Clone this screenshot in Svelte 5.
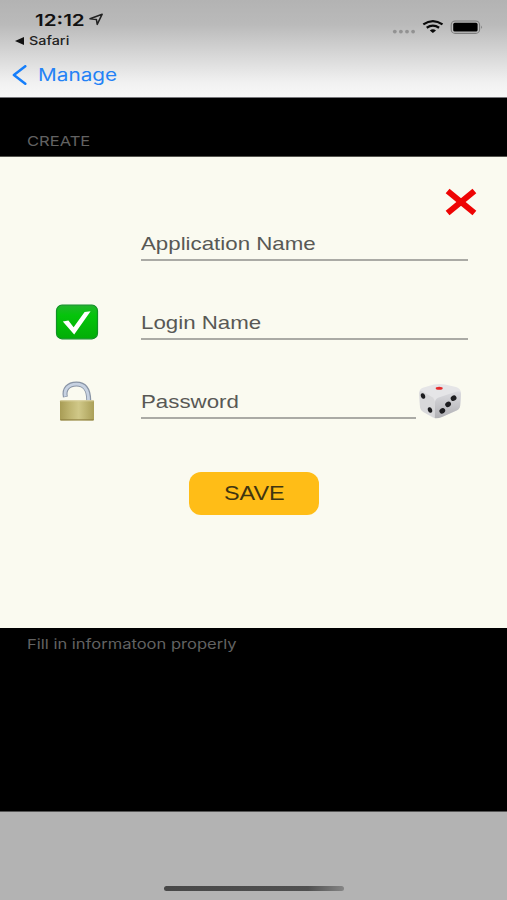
<script>
  let fields = [
    { label: 'Application Name', icon: '', random: false },
    { label: 'Login Name', icon: 'check', random: false },
    { label: 'Password', icon: 'lock', random: true }
  ];
</script>

<div class="screen">
  <header>
    <div class="status">
      <div class="clock">
        <span class="wide time">12:12</span>
        <svg class="location" width="15" height="13" viewBox="0 0 15 13">
          <path d="M1 5.8 L13.2 1.2 L8.2 11.4 L7.4 6.4 Z" fill="none" stroke="#222" stroke-width="1.5" stroke-linejoin="round" />
        </svg>
      </div>
      <svg class="signals" width="92" height="18" viewBox="0 0 92 18">
        <g fill="#929292">
          <circle cx="3.8" cy="12.6" r="1.9" />
          <circle cx="9.9" cy="12.6" r="1.9" />
          <circle cx="16" cy="12.6" r="1.9" />
          <circle cx="22.1" cy="12.6" r="1.9" />
        </g>
        <g fill="none" stroke="#0a0a0a" stroke-width="2.3">
          <path d="M32.3 5.4 Q41.9 -1.2 51.5 5.4" />
          <path d="M35.7 8.8 Q41.9 4.6 48.1 8.8" />
        </g>
        <path d="M38.8 11.4 Q41.9 9.2 45 11.4 L41.9 14 Z" fill="#0a0a0a" />
        <rect x="60.2" y="2" width="28.4" height="12.4" rx="4" fill="none" stroke="#7d7d7d" stroke-width="1.1" />
        <rect x="62.2" y="3.8" width="24.4" height="8.8" rx="1.6" fill="#000" />
        <path d="M90.3 6.4 Q92 8.2 90.3 10 Z" fill="#6d6d6d" />
      </svg>
    </div>
    <div class="back-app">
      <svg width="9" height="8" viewBox="0 0 9 8"><path d="M0 4 L9 0 V8 Z" fill="#111" /></svg>
      <span class="wide safari">Safari</span>
    </div>
    <div class="nav">
      <svg width="15" height="20" viewBox="0 0 15 20">
        <path d="M13.3 1.2 L1.9 10 L13.3 18.8" fill="none" stroke="#157efb" stroke-width="2.5" stroke-linecap="round" stroke-linejoin="round" />
      </svg>
      <span class="wide manage">Manage</span>
    </div>
  </header>

  <div class="section-title"><span class="wide create">CREATE</span></div>

  <main>
    <div class="close">
      <svg width="34" height="28" viewBox="0 0 34 28">
        <path d="M3.6 3 L30.4 25 M30.4 3 L3.6 25" stroke="#ee0404" stroke-width="6" />
      </svg>
    </div>

    {#each fields as field}
      <div class="row">
        <div class="icon">
          {#if field.icon === 'check'}
            <svg width="44" height="36" viewBox="0 0 44 36">
              <defs>
                <linearGradient id="green" x1="0" y1="0" x2="0" y2="1">
                  <stop offset="0" stop-color="#22b52c" />
                  <stop offset="0.3" stop-color="#05c40b" />
                  <stop offset="1" stop-color="#02ad07" />
                </linearGradient>
              </defs>
              <rect x="1.5" y="1.2" width="41" height="33.6" rx="5.5" fill="url(#green)" stroke="#119225" stroke-width="1.2" />
              <path d="M7.8 17.4 L13.4 16.4 L18.6 23.2 L29.6 8 L35.6 7.2 L19.2 30.4 Z" fill="#fff" />
            </svg>
          {:else if field.icon === 'lock'}
            <svg width="44" height="42" viewBox="0 0 44 42">
              <defs>
                <linearGradient id="brass" x1="0" y1="0" x2="1" y2="0">
                  <stop offset="0" stop-color="#a89c55" />
                  <stop offset="0.3" stop-color="#c0b672" />
                  <stop offset="0.55" stop-color="#d0c888" />
                  <stop offset="1" stop-color="#aa9f58" />
                </linearGradient>
              </defs>
              <path d="M10.4 17 C8.6 9 13.4 4 21.4 4 C29.6 4 33.8 9 33.8 21" fill="none" stroke="#8994a5" stroke-width="5" />
              <path d="M10.4 16.4 C8.8 9 13.6 4.1 21.4 4.1 C29.4 4.1 33.6 9 33.6 21" fill="none" stroke="#c7d2e2" stroke-width="2.8" />
              <rect x="5" y="20.2" width="34" height="20.2" rx="1.2" fill="url(#brass)" />
              <path d="M5.4 20.8 H38.6" stroke="#ddd4a4" />
              <path d="M5.4 39.9 H38.6" stroke="#8b7c3e" />
            </svg>
          {/if}
        </div>
        <div class="field">
          <span class="wide label">{field.label}</span>
        </div>
        {#if field.random}
          <svg class="dice" width="44" height="38" viewBox="0 0 44 38">
            <defs>
              <linearGradient id="side" x1="0" y1="0" x2="0" y2="1">
                <stop offset="0" stop-color="#dcdce0" />
                <stop offset="1" stop-color="#b0b0b4" />
              </linearGradient>
            </defs>
            <path d="M1.2 11 Q1.2 6.6 5.6 5.4 L15 2.8 Q21 1.4 27 2.6 L38 5 Q43.2 6.6 43 11.6 L42.2 23.4 Q41.8 27 38.6 28.6 L24 35 Q18.4 37 14.5 35.4 L5.4 30 Q2.4 28.2 2 25 Z" fill="#e5e5e7" />
            <path d="M17 20 Q17.4 16.8 20.6 15.6 L38.6 9.4 Q43 8.6 43 12 L42.2 23.4 Q41.8 27 38.6 28.6 L24 35 Q19.4 36.8 16.4 36 Q15.8 27 17 20 Z" fill="url(#side)" />
            <path d="M1.2 11 Q1.6 8.4 4.4 9.4 L14.4 15.2 Q17 17 17 20 L16.8 36 L5.4 30 Q2.4 28.2 2 25 Z" fill="#d8d8da" />
            <ellipse cx="21.2" cy="6.2" rx="3.5" ry="1.5" fill="#e62b2b" />
            <g fill="#1d1d20">
              <ellipse cx="5" cy="14" rx="2.1" ry="2.9" transform="rotate(-20 5 14)" />
              <ellipse cx="12" cy="28" rx="2.1" ry="2.9" transform="rotate(-20 12 28)" />
              <ellipse cx="35.6" cy="16.2" rx="3" ry="2.6" transform="rotate(-35 35.6 16.2)" />
              <ellipse cx="30.1" cy="22.3" rx="3" ry="2.6" transform="rotate(-35 30.1 22.3)" />
              <ellipse cx="24.3" cy="28.8" rx="3" ry="2.6" transform="rotate(-35 24.3 28.8)" />
            </g>
          </svg>
        {/if}
      </div>
    {/each}

    <button class="save"><span class="wide save-text">SAVE</span></button>
  </main>

  <div class="hint"><span class="wide fill">Fill in informatoon properly</span></div>

  <footer><div class="home-bar"></div></footer>
</div>

<style>
  :global(body) {
    background: #000;
  }

  .screen {
    width: 507px;
    height: 900px;
    display: flex;
    flex-direction: column;
    overflow: hidden;
    background: #000;
    font-family: Inter, sans-serif;
  }

  /* text is drawn wider than the font's natural width */
  .wide {
    display: inline-block;
    white-space: nowrap;
    transform: scaleX(1.2);
    transform-origin: left center;
  }

  header {
    box-sizing: border-box;
    height: 98px;
    flex: none;
    background: linear-gradient(#b3b3b3, #bababa 25%, #dadada 60%, #f1f1f1 85%, #f8f8f8);
    border-bottom: 1px solid #77777b;
  }

  .status {
    height: 32px;
    display: flex;
    justify-content: space-between;
    padding: 0 24px 0 35px;
  }

  .clock {
    display: flex;
    padding-top: 10px;
  }

  .time {
    width: 54px;
    font-size: 16.5px;
    line-height: 20px;
    font-weight: 600;
    color: #111;
    transform: scaleX(1.25);
  }

  .location {
    margin-top: 3px;
  }

  .signals {
    margin-top: 19px;
  }

  .back-app {
    height: 17px;
    display: flex;
    align-items: center;
    gap: 5px;
    padding-left: 15px;
  }

  .safari {
    font-size: 12px;
    line-height: 17px;
    font-weight: 500;
    color: #222;
  }

  .nav {
    height: 51px;
    display: flex;
    align-items: center;
    gap: 11px;
    padding-left: 12px;
  }

  .manage {
    font-size: 17.3px;
    color: #2482f6;
  }

  .section-title {
    box-sizing: border-box;
    height: 59px;
    flex: none;
    padding: 32px 0 0 27px;
    border-bottom: 1px solid #55554f;
  }

  .create,
  .fill {
    font-size: 13.7px;
    line-height: 20px;
    color: #626262;
    transform: scaleX(1.208);
  }

  main {
    box-sizing: border-box;
    height: 471px;
    flex: none;
    background: #fafaf0;
    padding-top: 31px;
    font-family: "Liberation Sans", Arial, sans-serif;
  }

  .close {
    height: 28px;
    display: flex;
    justify-content: flex-end;
    padding-right: 29px;
  }

  .row {
    height: 46px;
    margin-bottom: 33px;
    display: flex;
    align-items: flex-end;
  }

  .icon {
    box-sizing: border-box;
    width: 141px;
    height: 44px;
    padding: 5px 0 0 55px;
    display: flex;
    align-items: center;
  }

  .field {
    box-sizing: border-box;
    width: 327px;
    height: 29px;
    margin-bottom: 1px;
    padding-top: 1px;
    border-bottom: 2px solid #aaaaa5;
  }

  .row:has(.dice) .field {
    width: 275px;
  }

  .label {
    font-size: 17.7px;
    line-height: 22px;
    color: #585855;
    transform: scaleX(1.26);
  }

  .dice {
    margin-left: 2px;
  }

  .save {
    display: block;
    width: 130px;
    height: 43px;
    margin: 52px 0 0 189px;
    padding: 0 0 0 35px;
    border: none;
    border-radius: 12px;
    background: #ffbd17;
    text-align: left;
    font-family: inherit;
  }

  .save-text {
    font-size: 19.5px;
    color: #3f3510;
  }

  .hint {
    height: 184px;
    flex: none;
    padding: 5px 0 0 27px;
    box-sizing: border-box;
    border-bottom: 1px solid #555;
  }

  footer {
    flex: 1;
    background: #b3b3b3;
    display: flex;
    align-items: flex-end;
    padding: 0 0 9px 164px;
  }

  .home-bar {
    width: 180px;
    height: 5px;
    border-radius: 3px;
    background: linear-gradient(90deg, #484848, #505050 80%, #858585);
  }
</style>
